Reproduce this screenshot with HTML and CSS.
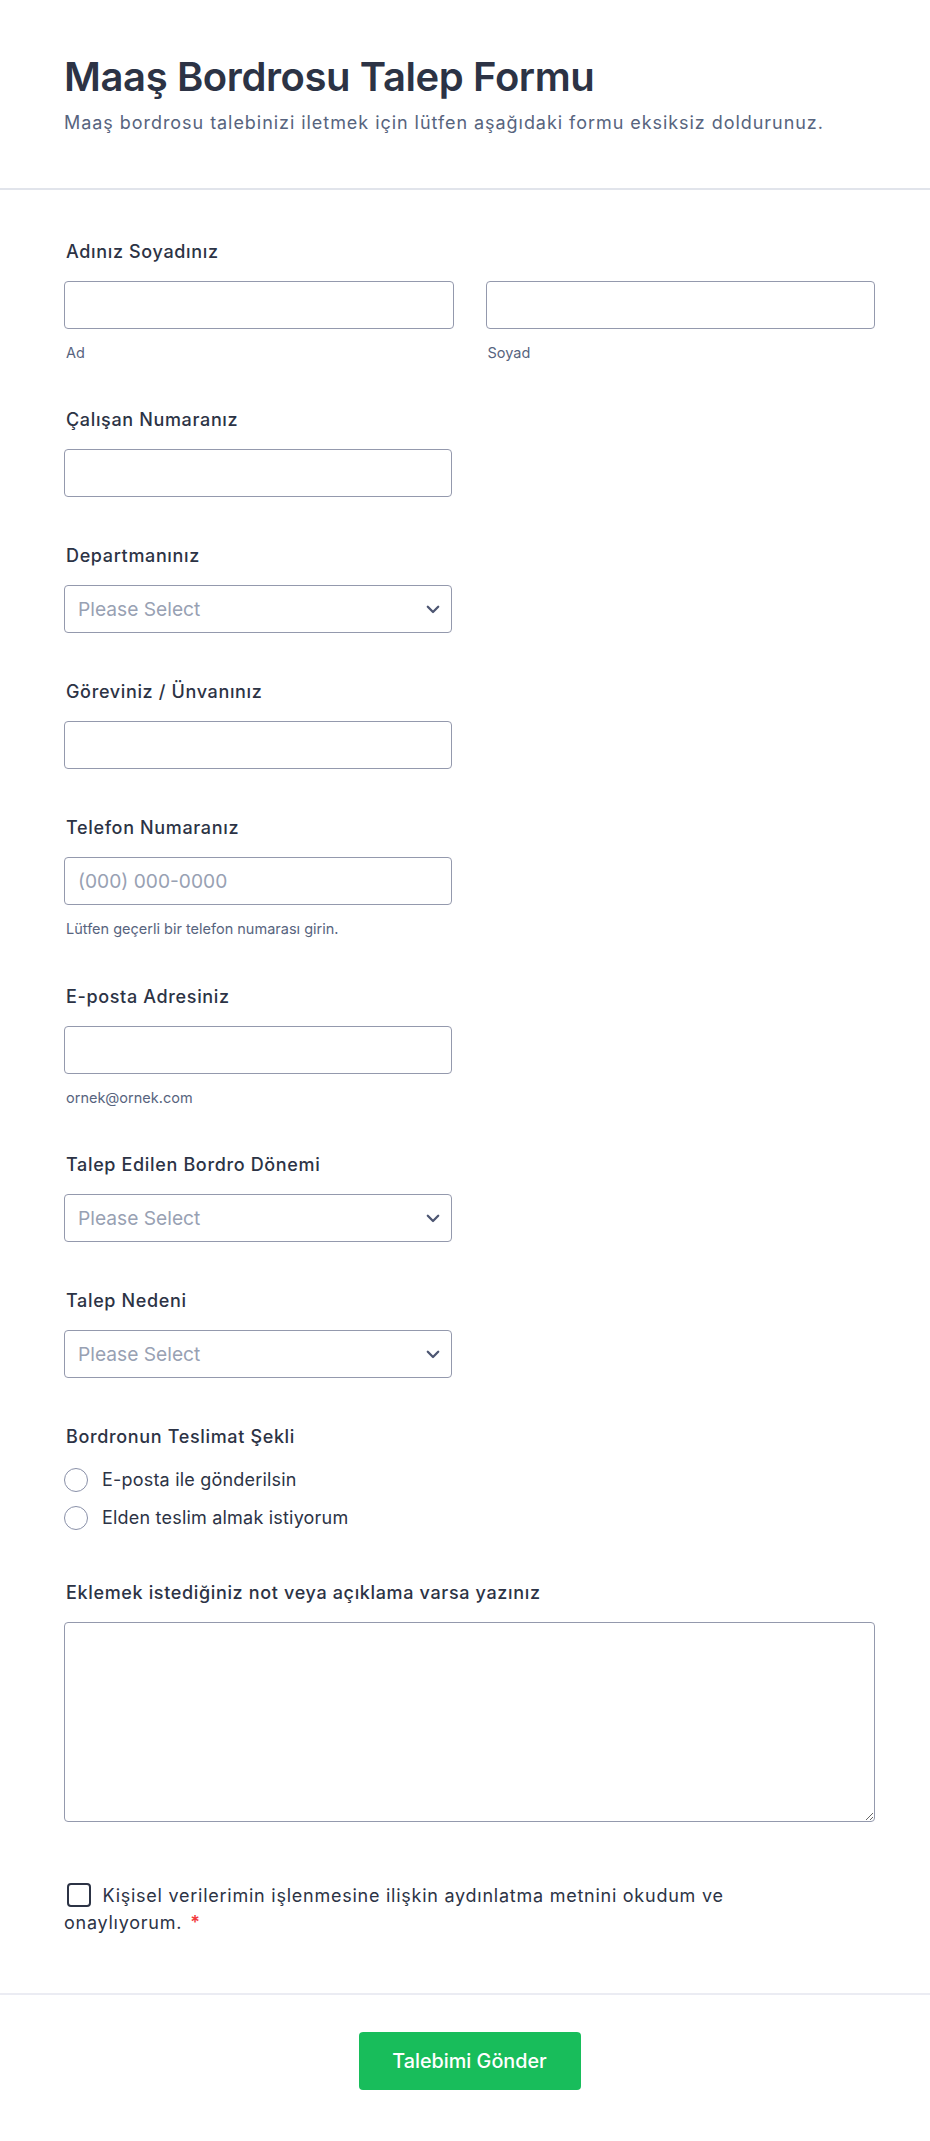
FILE: index.html
```html
<!DOCTYPE html>
<html lang="tr">
<head>
<meta charset="utf-8">
<title>Maaş Bordrosu Talep Formu</title>
<link rel="stylesheet" href="styles.css">
</head>
<body>
<div class="page">
  <header class="form-header">
    <div class="wrap">
      <h1 class="form-title">Maaş Bordrosu Talep Formu</h1>
      <p class="form-subtitle">Maaş bordrosu talebinizi iletmek için lütfen aşağıdaki formu eksiksiz doldurunuz.</p>
    </div>
  </header>

  <main class="form-body wrap">
    <div class="field">
      <label class="label">Adınız Soyadınız</label>
      <div class="name-row">
        <div class="name-col">
          <input class="input" type="text">
          <span class="sublabel">Ad</span>
        </div>
        <div class="name-col">
          <input class="input" type="text">
          <span class="sublabel">Soyad</span>
        </div>
      </div>
    </div>

    <div class="field">
      <label class="label">Çalışan Numaranız</label>
      <input class="input narrow" type="text">
    </div>

    <div class="field">
      <label class="label">Departmanınız</label>
      <div class="select narrow">
        <span class="select-text">Please Select</span>
        <svg class="chevron" width="14" height="9" viewBox="0 0 14 9"><path d="M1.8 1.8 L7 7 L12.2 1.8" fill="none" stroke="#4d5672" stroke-width="2.3" stroke-linecap="round" stroke-linejoin="round"/></svg>
      </div>
    </div>

    <div class="field">
      <label class="label">Göreviniz / Ünvanınız</label>
      <input class="input narrow" type="text">
    </div>

    <div class="field">
      <label class="label">Telefon Numaranız</label>
      <input class="input narrow" type="text" placeholder="(000) 000-0000">
      <span class="sublabel">Lütfen geçerli bir telefon numarası girin.</span>
    </div>

    <div class="field">
      <label class="label">E-posta Adresiniz</label>
      <input class="input narrow" type="text">
      <span class="sublabel">ornek@ornek.com</span>
    </div>

    <div class="field">
      <label class="label">Talep Edilen Bordro Dönemi</label>
      <div class="select narrow">
        <span class="select-text">Please Select</span>
        <svg class="chevron" width="14" height="9" viewBox="0 0 14 9"><path d="M1.8 1.8 L7 7 L12.2 1.8" fill="none" stroke="#4d5672" stroke-width="2.3" stroke-linecap="round" stroke-linejoin="round"/></svg>
      </div>
    </div>

    <div class="field">
      <label class="label">Talep Nedeni</label>
      <div class="select narrow">
        <span class="select-text">Please Select</span>
        <svg class="chevron" width="14" height="9" viewBox="0 0 14 9"><path d="M1.8 1.8 L7 7 L12.2 1.8" fill="none" stroke="#4d5672" stroke-width="2.3" stroke-linecap="round" stroke-linejoin="round"/></svg>
      </div>
    </div>

    <div class="field">
      <label class="label">Bordronun Teslimat Şekli</label>
      <div class="radio-list">
        <label class="radio-row"><span class="radio"></span><span class="radio-text">E-posta ile gönderilsin</span></label>
        <label class="radio-row"><span class="radio"></span><span class="radio-text">Elden teslim almak istiyorum</span></label>
      </div>
    </div>

    <div class="field">
      <label class="label">Eklemek istediğiniz not veya açıklama varsa yazınız</label>
      <textarea class="textarea"></textarea>
    </div>

    <div class="field consent">
      <p class="consent-text"><span class="checkbox"></span>Kişisel verilerimin işlenmesine ilişkin aydınlatma metnini okudum ve onaylıyorum.<span class="req">*</span></p>
    </div>
  </main>

  <footer class="form-footer">
    <div class="wrap footer-inner">
      <button class="submit" type="button">Talebimi Gönder</button>
    </div>
  </footer>
</div>
</body>
</html>
```

FILE: styles.css
```css
* {
  box-sizing: border-box;
}

html, body {
  margin: 0;
  padding: 0;
  background: #ffffff;
}

body {
  font-family: "Inter", "Noto Sans", "Liberation Sans", sans-serif;
  color: #2c3345;
}

.wrap {
  margin-left: 64px;
  width: 811px;
}

/* Header */
.form-header {
  padding-top: 53px;
  padding-bottom: 52px;
  border-bottom: 2px solid #e1e4eb;
}

.form-title {
  margin: 0;
  font-size: 40px;
  line-height: 48px;
  font-weight: 600;
  letter-spacing: -0.4px;
  color: #2c3345;
}

.form-subtitle {
  margin: 9px 0 0;
  font-size: 18px;
  line-height: 25.5px;
  letter-spacing: 0.95px;
  color: #57647e;
}

/* Body */
.form-body {
  display: flex;
  flex-direction: column;
  gap: 47px;
  padding-top: 50px;
  padding-bottom: 57px;
}

.field {
  display: flex;
  flex-direction: column;
  align-items: flex-start;
}

.label {
  display: block;
  padding-left: 2px;
  font-size: 18px;
  line-height: 24px;
  font-weight: 500;
  letter-spacing: 0.65px;
  color: #2c3345;
  margin-bottom: 17px;
}

.name-row {
  display: grid;
  grid-template-columns: 1fr 1fr;
  column-gap: 32px;
  width: 100%;
}

.name-col {
  display: flex;
  flex-direction: column;
}

.input {
  display: block;
  width: 100%;
  height: 48px;
  border: 1px solid #9499ad;
  border-radius: 4px;
  padding: 0 13px;
  font-family: inherit;
  font-size: 19.2px;
  color: #2c3345;
  background: #fff;
  outline: none;
}

.input::placeholder {
  color: #98a1b3;
}

.narrow {
  width: 388px;
}

.sublabel {
  display: block;
  padding-left: 2px;
  margin-top: 16px;
  font-size: 14.5px;
  line-height: 16.5px;
  color: #57647e;
}

.select {
  display: flex;
  align-items: center;
  justify-content: space-between;
  height: 48px;
  border: 1px solid #9499ad;
  border-radius: 4px;
  padding: 0 11px 0 13px;
  background: #fff;
}

.select-text {
  font-size: 19.2px;
  color: #98a1b3;
}

.chevron {
  display: block;
}

/* Radios */
.radio-list {
  display: flex;
  flex-direction: column;
  gap: 14px;
  margin-top: 2px;
  margin-bottom: 3.5px;
}

.radio-row {
  display: flex;
  align-items: center;
  gap: 14px;
  height: 24px;
}

.radio {
  width: 24px;
  height: 24px;
  border: 1.6px solid #8990a8;
  border-radius: 50%;
  background: #fff;
  flex: none;
}

.radio-text {
  font-size: 18px;
  line-height: 24px;
  letter-spacing: 0.2px;
  color: #2c3345;
}

/* Textarea */
.textarea {
  display: block;
  width: 100%;
  height: 200px;
  border: 1px solid #9499ad;
  border-radius: 4px;
  padding: 10px 13px;
  font-family: inherit;
  font-size: 17.6px;
  resize: both;
  outline: none;
}

/* Consent */
.consent {
  margin-top: 13px;
}

.consent-text {
  margin: 0;
  max-width: 700px;
  font-size: 18px;
  line-height: 27px;
  letter-spacing: 0.75px;
  color: #2c3345;
}

.checkbox {
  display: inline-block;
  vertical-align: top;
  width: 24px;
  height: 24px;
  margin: 1.5px 12px 0 2.5px;
  border: 2px solid #2c3345;
  border-radius: 4px;
  background: #fff;
}

.req {
  margin-left: 8px;
  color: #f23a3c;
  font-weight: 600;
}

/* Footer */
.form-footer {
  border-top: 2px solid #ebecf3;
  padding-top: 37px;
  padding-bottom: 51px;
}

.footer-inner {
  display: flex;
  justify-content: center;
}

.submit {
  width: 222px;
  height: 58px;
  border: none;
  border-radius: 4px;
  background: #18bd5b;
  color: #ffffff;
  font-family: inherit;
  font-size: 19.8px;
  font-weight: 500;
  cursor: pointer;
}
```
